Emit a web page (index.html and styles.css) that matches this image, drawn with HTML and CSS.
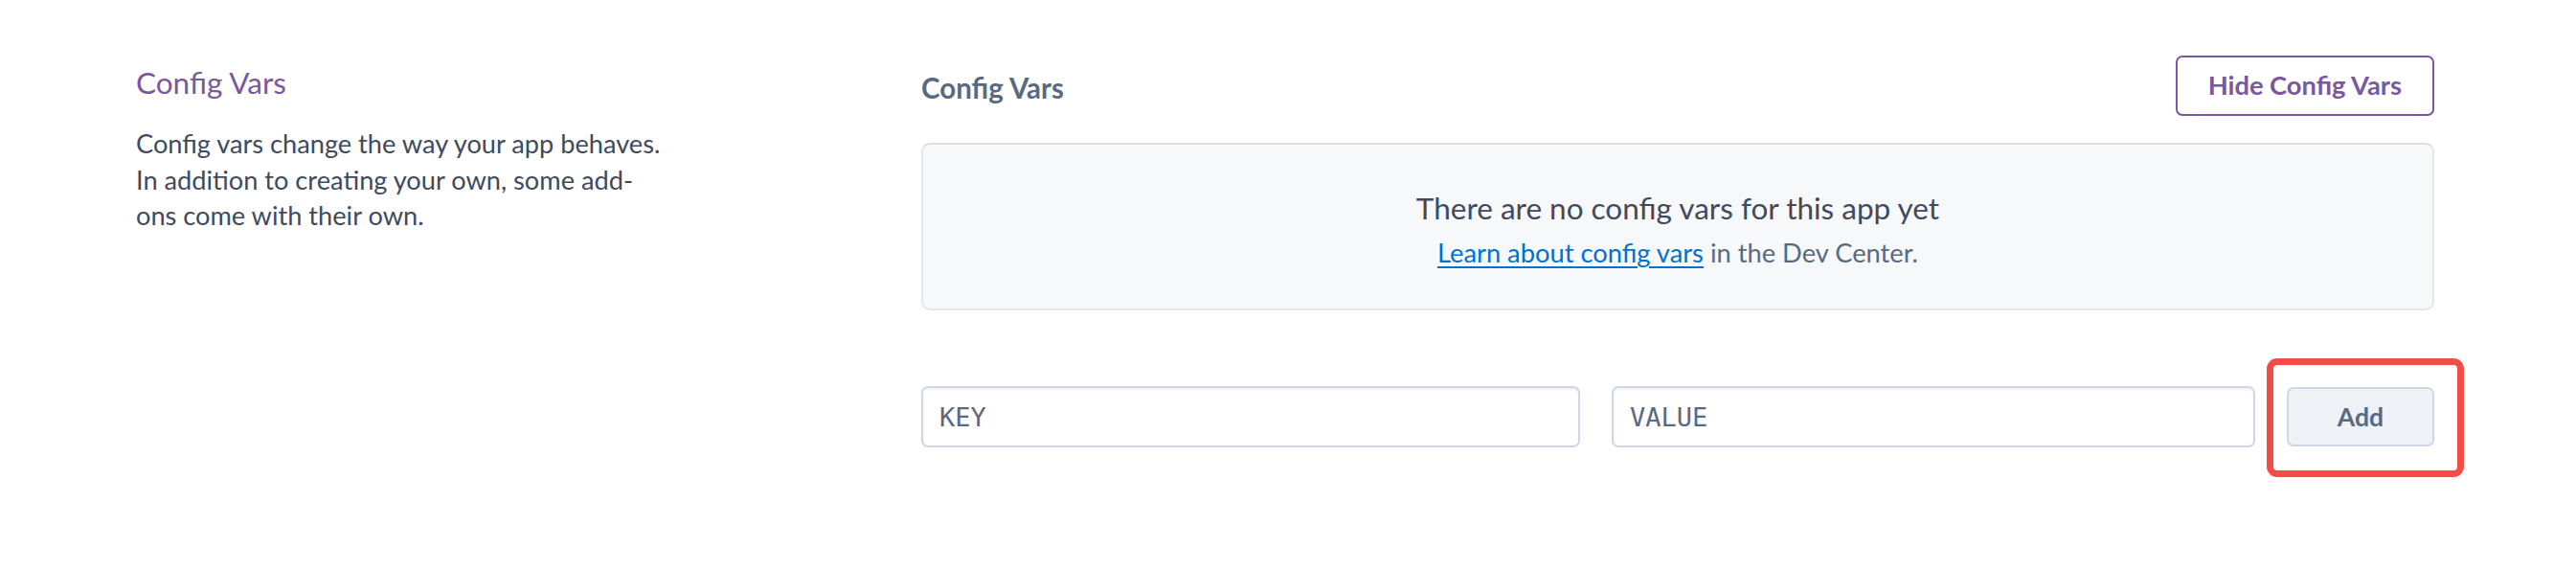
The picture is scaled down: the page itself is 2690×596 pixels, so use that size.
FILE: index.html
```html
<!DOCTYPE html>
<html lang="en">
<head>
<meta charset="utf-8">
<title>Config Vars</title>
<link rel="stylesheet" href="styles.css">
</head>
<body>
<main class="section">
  <div class="info">
    <h2 class="info-title">Config Vars</h2>
    <p class="info-text">Config vars change the way your app behaves.<br>In addition to creating your own, some add-<br>ons come with their own.</p>
  </div>
  <div class="content">
    <div class="head">
      <h3 class="head-title">Config Vars</h3>
      <button class="btn-outline">Hide Config Vars</button>
    </div>
    <div class="empty">
      <p class="empty-title">There are no config vars for this app yet</p>
      <p class="empty-sub"><a class="link" href="#">Learn about config vars</a> in the Dev Center.</p>
    </div>
    <div class="form">
      <input class="field field-key" type="text" placeholder="KEY">
      <input class="field field-value" type="text" placeholder="VALUE">
      <div class="add-wrap">
        <button class="btn-add">Add</button>
        <span class="highlight"></span>
      </div>
    </div>
  </div>
</main>
</body>
</html>
```
FILE: styles.css
```css
* { box-sizing: border-box; }
html, body { margin: 0; padding: 0; background: #ffffff; }
body {
  min-height: 596px;
  font-family: Lato, "Open Sans", sans-serif;
  color: #3f4a5e;
}

.section {
  display: grid;
  grid-template-columns: 820px 1fr;
  padding: 58px 148px 80px 142px;
}

.info-title {
  margin: 10px 0 0;
  font-size: 31.5px;
  font-weight: 400;
  line-height: 1.2;
  color: #79589f;
}
.info-text {
  margin: 25px 0 0;
  width: 600px;
  font-size: 27.2px;
  line-height: 37.7px;
  color: #3f4a5e;
}

.content { display: flex; flex-direction: column; }

.head {
  display: flex;
  align-items: flex-start;
  justify-content: space-between;
  height: 63px;
}
.head-title {
  margin: 16px 0 0;
  font-size: 29.5px;
  font-weight: 700;
  line-height: 1.2;
  color: #596981;
}
.btn-outline {
  height: 63px;
  padding: 0 32px;
  border: 2px solid #79589f;
  border-radius: 7px;
  background: #fff;
  color: #79589f;
  font-family: inherit;
  font-size: 27.3px;
  font-weight: 700;
  line-height: 1.2;
}

.empty {
  margin-top: 28px;
  height: 175px;
  padding-top: 4px;
  border: 2px solid #e6e7eb;
  border-top-color: #dcdde2;
  border-radius: 9px;
  background: #f7f8fa;
  display: flex;
  flex-direction: column;
  align-items: center;
  justify-content: center;
  text-align: center;
}
.empty-title {
  margin: 0;
  font-size: 31.5px;
  line-height: 40px;
  color: #3f4a5e;
}
.empty-sub {
  margin: 11px 0 0;
  font-size: 27.3px;
  line-height: 32px;
  color: #596981;
}
.link { color: #0070d2; text-decoration: underline; text-underline-offset: 4px; }

.form {
  display: flex;
  align-items: center;
  gap: 33px;
  margin-top: 79px;
}
.field {
  height: 64px;
  padding: 0 17px;
  border: 2px solid #cfd7e6;
  border-radius: 7px;
  background: #fff;
  box-shadow: inset 0 2px 2px rgba(207, 215, 230, 0.35);
  font-family: "DejaVu Sans Mono", monospace;
  font-size: 27px;
  color: #3f4a5e;
}
.field::placeholder { color: #596981; }
.field-key { flex: 0 0 688px; }
.field-value { flex: 1 1 auto; min-width: 0; }

.add-wrap { position: relative; flex: 0 0 154px; height: 62px; }
.btn-add {
  display: block;
  width: 154px;
  height: 62px;
  border: 2px solid #cfd7e6;
  border-radius: 7px;
  background: #eef1f6;
  color: #596981;
  font-family: inherit;
  font-size: 26.6px;
  font-weight: 700;
}
.highlight {
  position: absolute;
  left: -21px;
  top: -30px;
  right: -31px;
  bottom: -32px;
  border: 7px solid #f44b47;
  border-radius: 11px;
  pointer-events: none;
}
```
